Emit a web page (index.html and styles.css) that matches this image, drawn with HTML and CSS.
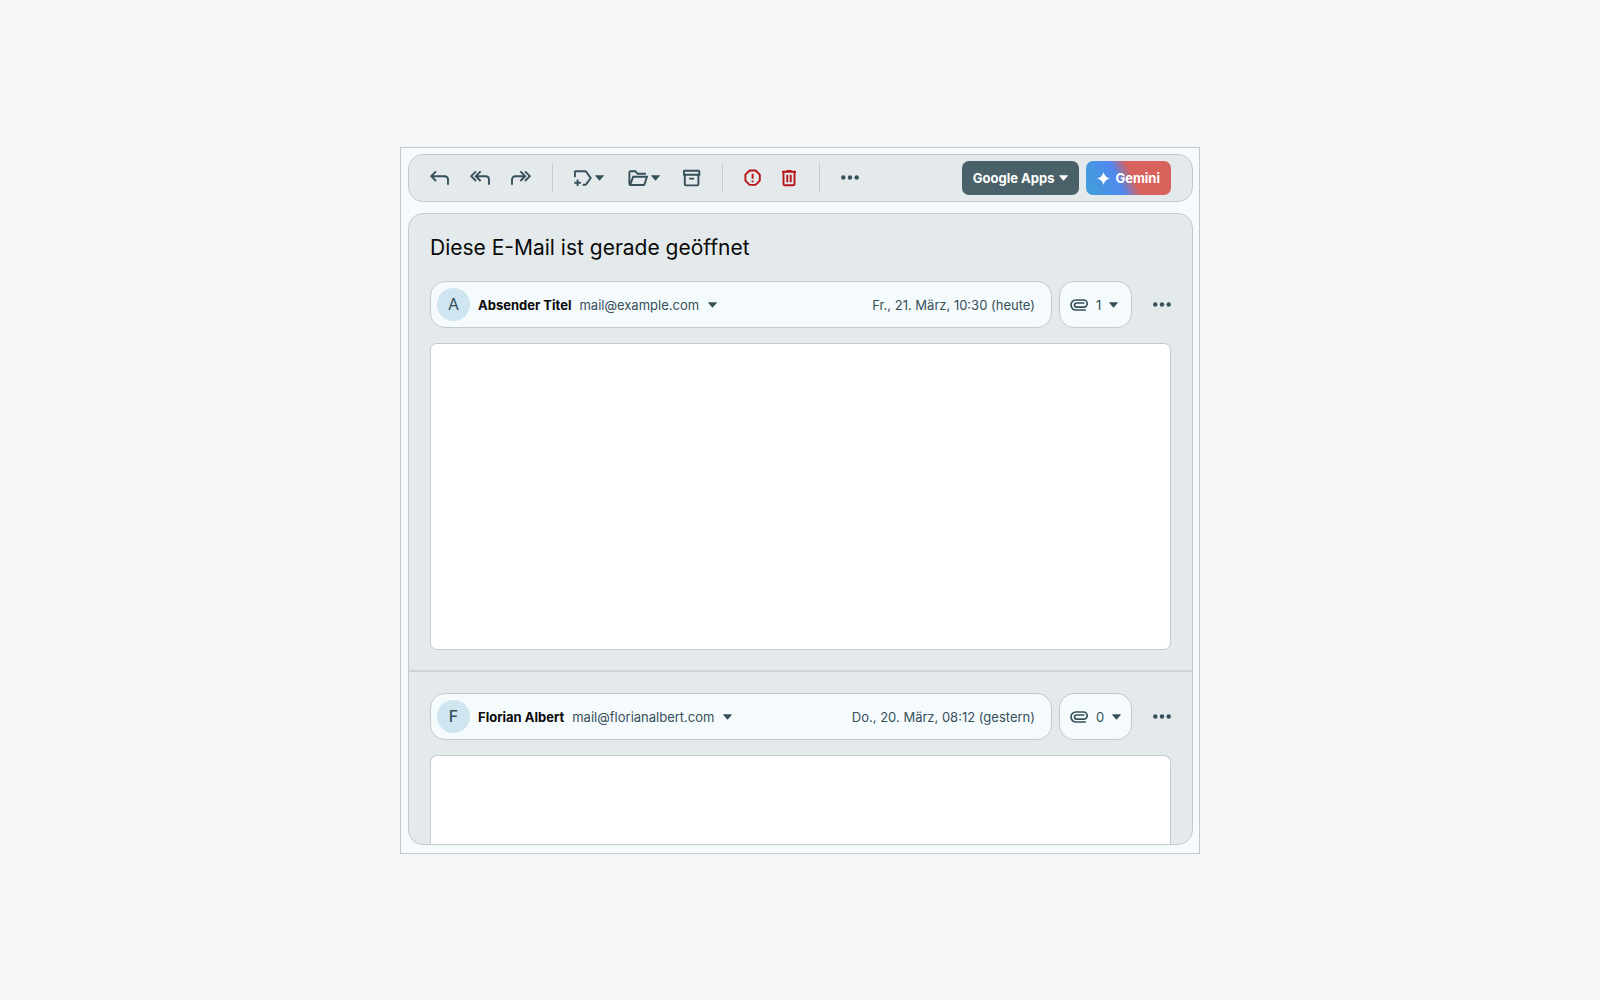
FILE: index.html
```
<!DOCTYPE html>
<html lang="de">
<head>
  <meta charset="UTF-8" />
  <meta name="viewport" content="width=device-width, initial-scale=1.0"/>
  <title>Mail</title>
  <link rel="stylesheet" href="styles.css">
</head>
<body>
  <!-- shared icons -->
  <svg class="sprite" aria-hidden="true">
    <symbol id="caret" viewBox="0 0 9 6"><path d="M.5.3h8q.5.1.2.6L5 5.3q-.5.5-1 0L.3.9Q0 .4.5.3z" fill="currentColor"/></symbol>
    <symbol id="dots" viewBox="0 0 18 5">
      <g fill="currentColor"><circle cx="2.3" cy="2.5" r="2.2"/><circle cx="9" cy="2.5" r="2.2"/><circle cx="15.7" cy="2.5" r="2.2"/></g>
    </symbol>
    <symbol id="clip" viewBox="0 0 18 12">
      <path d="M15.2 11H6A5 5 0 0 1 6 1h7.6a3.6 3.6 0 0 1 0 7.2H6.6a2.1 2.1 0 0 1 0-4.2h7.2" fill="none" stroke="currentColor" stroke-width="1.7" stroke-linecap="round"/>
    </symbol>
  </svg>

  <main class="window">
    <div class="toolbar">
      <div class="group">
        <button class="icon" aria-label="Antworten">
          <svg width="21" height="18" viewBox="0 0 21 18"><path d="M6 2.4 1.2 7.2 6 12M1.4 7.2H14.4Q18 7.2 18 10.8V15.8"/></svg>
        </button>
        <button class="icon" aria-label="Allen antworten">
          <svg width="21" height="18" viewBox="0 0 21 18"><path d="M6 2.4 1.2 7.2 6 12M10.6 2.4 5.8 7.2l4.8 4.8M6.1 7.2h9.4Q19 7.2 19 10.7v5.1"/></svg>
        </button>
        <button class="icon" aria-label="Weiterleiten">
          <svg width="21" height="18" viewBox="0 0 21 18"><path d="m15 2.4 4.8 4.8L15 12M10.4 2.4l4.8 4.8-4.8 4.8M14.9 7.2H5.5Q2 7.2 2 10.7v5.1"/></svg>
        </button>
      </div>
      <span class="line"></span>
      <div class="group actions">
        <button class="icon" aria-label="Label">
          <svg width="18" height="18" viewBox="0 0 18 18"><path d="M.9 8.2V3.3q0-1 1-1H11q.8 0 1.3.6L16.7 9l-4.4 6.1q-.5.6-1.3.6H8.6M3.6 10.4v6.6M.3 13.7h6.6"/></svg>
          <svg class="caret" width="9" height="6"><use href="#caret"/></svg>
        </button>
        <button class="icon" aria-label="Verschieben">
          <svg width="21" height="18" viewBox="0 0 21 18"><path d="M19 4.8h-8.4L8.4 2.2H3.5q-1.1 0-1.1 1.1v11.6q0 1.1 1.1 1.1h12.9q.9 0 1.2-.9l2.3-7.3H6.1L3.3 15.6"/></svg>
          <svg class="caret" width="9" height="6"><use href="#caret"/></svg>
        </button>
        <button class="icon" aria-label="Archivieren">
          <svg width="18" height="18" viewBox="0 0 18 18"><path d="M1.5 1.7h14.2q.6 0 .6.6v3.4H.9V2.3q0-.6.6-.6zM1.8 5.8v9.5q0 1.1 1.1 1.1h11.4q1.1 0 1.1-1.1V5.8M6.1 9.6h5"/></svg>
        </button>
      </div>
      <span class="line"></span>
      <div class="group danger">
        <button class="icon" aria-label="Spam melden">
          <svg width="18" height="18" viewBox="0 0 18 18"><path d="M5.6 1.5h6l4.2 4.2v6l-4.2 4.2h-6l-4.2-4.2v-6zM8.6 4.8v5M8.6 11.4v1.8"/></svg>
        </button>
        <button class="icon" aria-label="Löschen">
          <svg width="18" height="18" viewBox="0 0 18 18"><path d="M2 2.7h14M6.4 1.9h5.2M3.5 3v12q0 1.3 1.3 1.3h8.4q1.3 0 1.3-1.3V3M7.3 5.7v7.6M10.7 5.7v7.6"/></svg>
        </button>
      </div>
      <span class="line"></span>
      <button class="icon" aria-label="Mehr">
        <svg width="18" height="5"><use href="#dots"/></svg>
      </button>

      <div class="apps">
        <button class="btn">Google Apps <svg width="9" height="6"><use href="#caret"/></svg></button>
        <button class="btn gemini">
          <svg width="13" height="13" viewBox="0 0 13 13"><path d="M6.5 0Q7.6 5.4 13 6.5 7.6 7.6 6.5 13 5.4 7.6 0 6.5 5.4 5.4 6.5 0z" fill="currentColor"/></svg>
          Gemini
        </button>
      </div>
    </div>

    <div class="reader">
      <article class="mail">
        <h1>Diese E-Mail ist gerade geöffnet</h1>
        <header class="mail-head">
          <div class="pill sender">
            <span class="avatar">A</span>
            <strong>Absender Titel</strong>
            <button class="address">mail@example.com <svg width="9" height="6"><use href="#caret"/></svg></button>
            <time>Fr., 21. März, 10:30 (heute)</time>
          </div>
          <button class="pill files" aria-label="Anhänge">
            <svg width="18" height="12"><use href="#clip"/></svg>
            <span>1</span>
            <svg width="9" height="6"><use href="#caret"/></svg>
          </button>
          <button class="icon more" aria-label="Mehr">
            <svg width="18" height="5"><use href="#dots"/></svg>
          </button>
        </header>
        <div class="mail-body"></div>
      </article>

      <article class="mail">
        <header class="mail-head">
          <div class="pill sender">
            <span class="avatar bold">F</span>
            <strong>Florian Albert</strong>
            <button class="address">mail@florianalbert.com <svg width="9" height="6"><use href="#caret"/></svg></button>
            <time>Do., 20. März, 08:12 (gestern)</time>
          </div>
          <button class="pill files" aria-label="Anhänge">
            <svg width="18" height="12"><use href="#clip"/></svg>
            <span>0</span>
            <svg width="9" height="6"><use href="#caret"/></svg>
          </button>
          <button class="icon more" aria-label="Mehr">
            <svg width="18" height="5"><use href="#dots"/></svg>
          </button>
        </header>
        <div class="mail-body cut"></div>
      </article>
    </div>
  </main>
</body>
</html>
```

FILE: styles.css
```
* {
  margin: 0;
  padding: 0;
  box-sizing: border-box;
}

body {
  min-height: 100vh;
  display: flex;
  align-items: center;
  justify-content: center;
  font-family: Inter, sans-serif;
  font-size: 13px;
  background: #f5f6f8;
  color: #36505a;
}

button {
  font: inherit;
  color: inherit;
  background: none;
  border: none;
  cursor: pointer;
}

svg {
  display: block;
  flex-shrink: 0;
}

.sprite {
  position: absolute;
  width: 0;
  height: 0;
}

.window {
  width: 50%;
  min-width: 780px;
  padding: 6px 6px 8px 7px;
  background: #f5fafd;
  border: 1px solid #c5c9cc;
}

/* toolbar */
.toolbar {
  display: flex;
  align-items: center;
  gap: 21px;
  height: 48px;
  padding: 0 21px;
  background: #e4e9eb;
  border: 1px solid #c3c9cc;
  border-radius: 15px;
}

.group {
  display: flex;
  align-items: center;
  gap: 19px;
}

.actions {
  gap: 23px;
}

.danger {
  gap: 18px;
  color: #b81418;
}

.line {
  width: 1px;
  height: 29px;
  background: #c5cbce;
}

.icon {
  display: flex;
  align-items: center;
  gap: 3px;
}

.icon path {
  fill: none;
  stroke: currentColor;
  stroke-width: 1.9;
}

.icon .caret {
  fill: currentColor;
}

.apps {
  display: flex;
  gap: 7px;
  margin-left: auto;
}

.btn {
  display: flex;
  align-items: center;
  gap: 5px;
  height: 34px;
  padding: 1px 11px 0;
  font-weight: 700;
  color: #fff;
  background: #4b6169;
  border-radius: 7px;
}

.gemini {
  background: linear-gradient(65deg, #429bdd 10%, #5287ee 39%, #d8625c 55%);
}

/* reader */
.reader {
  margin-top: 11px;
  background: #e4e9eb;
  border: 1px solid #c3c9cc;
  border-radius: 15px;
  overflow: hidden;
}

.mail {
  padding: 21px 21px 20px;
}

.mail + .mail {
  padding-bottom: 0;
  border-top: 2px solid #cdd3d6;
}

h1 {
  margin-bottom: 20px;
  font-size: 21px;
  font-weight: 400;
  line-height: 26px;
  color: #0a0a0a;
}

.mail-head {
  display: flex;
  align-items: center;
  gap: 7px;
  margin-bottom: 15px;
}

.pill {
  display: flex;
  align-items: center;
  height: 47px;
  padding-top: 1px;
  background: #f5fafd;
  border: 1px solid #c3c9cc;
  border-radius: 15px;
}

.sender {
  flex: 1;
  gap: 8px;
  padding-left: 6px;
  padding-right: 16px;
}

.avatar {
  width: 33px;
  height: 33px;
  line-height: 33px;
  text-align: center;
  font-size: 16px;
  background: #cfe5f0;
  border-radius: 50%;
}

.bold {
  font-weight: 500;
}

strong {
  font-weight: 700;
  color: #0a0a0a;
}

.address {
  display: flex;
  align-items: center;
  gap: 9px;
}

time {
  margin-left: auto;
}

.files {
  gap: 8px;
  width: 73px;
  padding-left: 10px;
}

.more {
  margin-left: 14px;
}

.mail-body {
  height: 307px;
  background: #fff;
  border: 1px solid #c3c9cc;
  border-radius: 7px;
}

/* runs on below the edge of the reader */
.cut {
  height: 89px;
  border-bottom: none;
  border-radius: 7px 7px 0 0;
}
```
